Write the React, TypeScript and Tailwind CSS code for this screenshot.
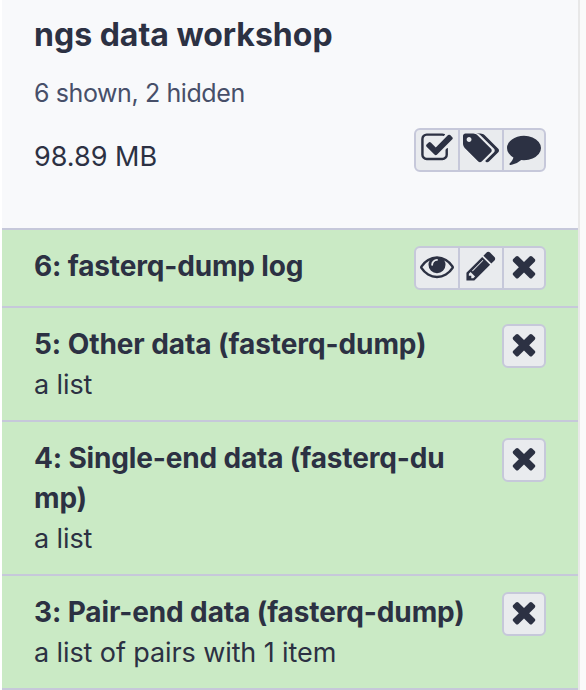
import React from "react";

const paths = {
  check:
    "M1472 930v318q0 119-84.5 203.5t-203.5 84.5h-832q-119 0-203.5-84.5t-84.5-203.5v-832q0-119 84.5-203.5t203.5-84.5h832q63 0 117 25 15 7 18 23 3 17-9 29l-49 49q-10 10-23 10-3 0-9-2-23-6-45-6h-832q-66 0-113 47t-47 113v832q0 66 47 113t113 47h832q66 0 113-47t47-113v-254q0-13 9-22l64-64q10-10 23-10 6 0 12 3 20 8 20 29zm231-489l-814 814q-24 24-57 24t-57-24l-430-430q-24-24-24-57t24-57l110-110q24-24 57-24t57 24l263 263 647-647q24-24 57-24t57 24l110 110q24 24 24 57t-24 57z",
  tags:
    "M448 448q0-53-37.5-90.5t-90.5-37.5-90.5 37.5-37.5 90.5 37.5 90.5 90.5 37.5 90.5-37.5 37.5-90.5zm1067 576q0 53-37 90l-491 492q-39 37-91 37-53 0-90-37l-715-716q-38-37-64.5-101t-26.5-117v-416q0-52 38-90t90-38h416q53 0 117 26.5t102 64.5l715 714q37 39 37 91zm384 0q0 53-37 90l-491 492q-39 37-91 37-36 0-59-14t-53-45l470-470q37-37 37-90 0-52-37-91l-715-714q-38-38-102-64.5t-117-26.5h224q53 0 117 26.5t102 64.5l715 714q37 39 37 91z",
  comment:
    "M1792 896q0 174-120 321.5t-326 233-450 85.5q-70 0-145-8-198 175-460 242-49 14-114 22-17 2-30.5-9t-17.5-29v-1q-3-4-.5-12t2-10 4.5-9.5l6-9 7-8.5 8-9q7-8 31-34.5t34.5-38 31-39.5 32.5-51 27-59 26-76q-157-89-247.5-220t-90.5-281q0-130 71-248.5t191-204.5 286-136.5 348-50.5q244 0 450 85.5t326 233 120 321.5z",
  eye:
    "M1664 960q-152-236-381-353 61 104 61 225 0 185-131.5 316.5t-316.5 131.5-316.5-131.5-131.5-316.5q0-121 61-225-229 117-381 353 133 205 333.5 326.5t434.5 121.5 434.5-121.5 333.5-326.5zm-720-384q0-20-14-34t-34-14q-125 0-214.5 89.5t-89.5 214.5q0 20 14 34t34 14 34-14 14-34q0-86 61-147t147-61q20 0 34-14t14-34zm848 384q0 34-20 69-140 230-376.5 368.5t-499.5 138.5-499.5-139-376.5-368q-20-35-20-69t20-69q140-229 376.5-368t499.5-139 499.5 139 376.5 368q20 35 20 69z",
  pencil:
    "M491 1536l91-91-235-235-91 91v107h128v128h107zm523-928q0-22-22-22-10 0-17 7l-542 542q-7 7-7 17 0 22 22 22 10 0 17-7l542-542q7-7 7-17zm-54-192l416 416-832 832h-416v-416zm683 96q0 53-37 90l-166 166-416-416 166-165q36-38 90-38 53 0 91 38l235 234q37 39 37 91z",
  times:
    "M1490 1322q0 40-28 68l-136 136q-28 28-68 28t-68-28l-294-294-294 294q-28 28-68 28t-68-28l-136-136q-28-28-28-68t28-68l294-294-294-294q-28-28-28-68t28-68l136-136q28-28 68-28t68 28l294 294 294-294q28-28 68-28t68 28l136 136q28 28 28 68t-28 68l-294 294 294 294q28 28 28 68z",
};

type IconName = keyof typeof paths;

function Icon({ name }: { name: IconName }) {
  const wide = name === "tags";
  return (
    <svg
      viewBox={wide ? "0 0 1899 1792" : "0 0 1792 1792"}
      className={wide ? "h-[34px] w-9 shrink-0" : "h-[34px] w-[34px] shrink-0"}
      fill="currentColor"
      aria-hidden="true"
    >
      <path d={paths[name]} />
    </svg>
  );
}

function ButtonGroup({ icons }: { icons: IconName[] }) {
  return (
    <div className="flex h-11 shrink-0 divide-x-2 divide-[#c6c8da] overflow-hidden rounded-md border-2 border-[#c6c8da] bg-[#e9ebee]">
      {icons.map((name) => (
        <button
          key={name}
          aria-label={name}
          className="box-content flex h-10 w-[42px] justify-center pt-px last:w-10"
        >
          <Icon name={name} />
        </button>
      ))}
    </div>
  );
}

const items: { title: string; detail?: string; icons: IconName[]; box: string; text: string }[] = [
  { title: "6: fasterq-dump log", icons: ["eye", "pencil", "times"], box: "h-[78px]", text: "tracking-[-0.15px]" },
  { title: "5: Other data (fasterq-dump)", detail: "a list", icons: ["times"], box: "h-[114px]", text: "tracking-[-0.08px]" },
  { title: "4: Single-end data (fasterq-dump)", detail: "a list", icons: ["times"], box: "h-[154px]", text: "tracking-[-0.16px]" },
  { title: "3: Pair-end data (fasterq-dump)", detail: "a list of pairs with 1 item", icons: ["times"], box: "h-[114px]", text: "tracking-[-0.12px]" },
];

export default function App() {
  return (
    <div className="flex h-[690px] w-[586px] overflow-hidden bg-[#fafafa] font-['Inter',sans-serif] text-[#2c3143]">
      <div className="w-0.5 shrink-0 bg-white" />
      <main className="w-[578px] shrink-0 border-r-2 border-[#e8e8e8] bg-[#f8f9fb]">
        <header className="h-[228px] pl-8 pr-8 pt-4">
          <h1 className="h-10 text-[32px] font-bold leading-[38px]">ngs data workshop</h1>
          <p className="mt-[21px] h-8 text-[25px] leading-8 tracking-[-0.4px] text-[#474f69]">6 shown, 2 hidden</p>
          <div className="mt-[19px] flex justify-between">
            <span className="pt-[9px] text-[27px] leading-10">98.89 MB</span>
            <ButtonGroup icons={["check", "tags", "comment"]} />
          </div>
        </header>
        {items.map((item) => (
          <section
            key={item.title}
            className={`${item.box} flex items-start justify-between border-t-2 border-[#c6c8da] bg-[#caeac5] pl-8 pr-8 pt-4`}
          >
            <div className="w-[432px] shrink">
              <h2 className={`${item.text} break-all text-[28px] font-bold leading-10`}>{item.title}</h2>
              {item.detail && <p className="pt-px text-[27px] leading-10 tracking-[-0.1px]">{item.detail}</p>}
            </div>
            <ButtonGroup icons={item.icons} />
          </section>
        ))}
        <div className="h-0.5 bg-[#c6c8da]" />
      </main>
    </div>
  );
}
